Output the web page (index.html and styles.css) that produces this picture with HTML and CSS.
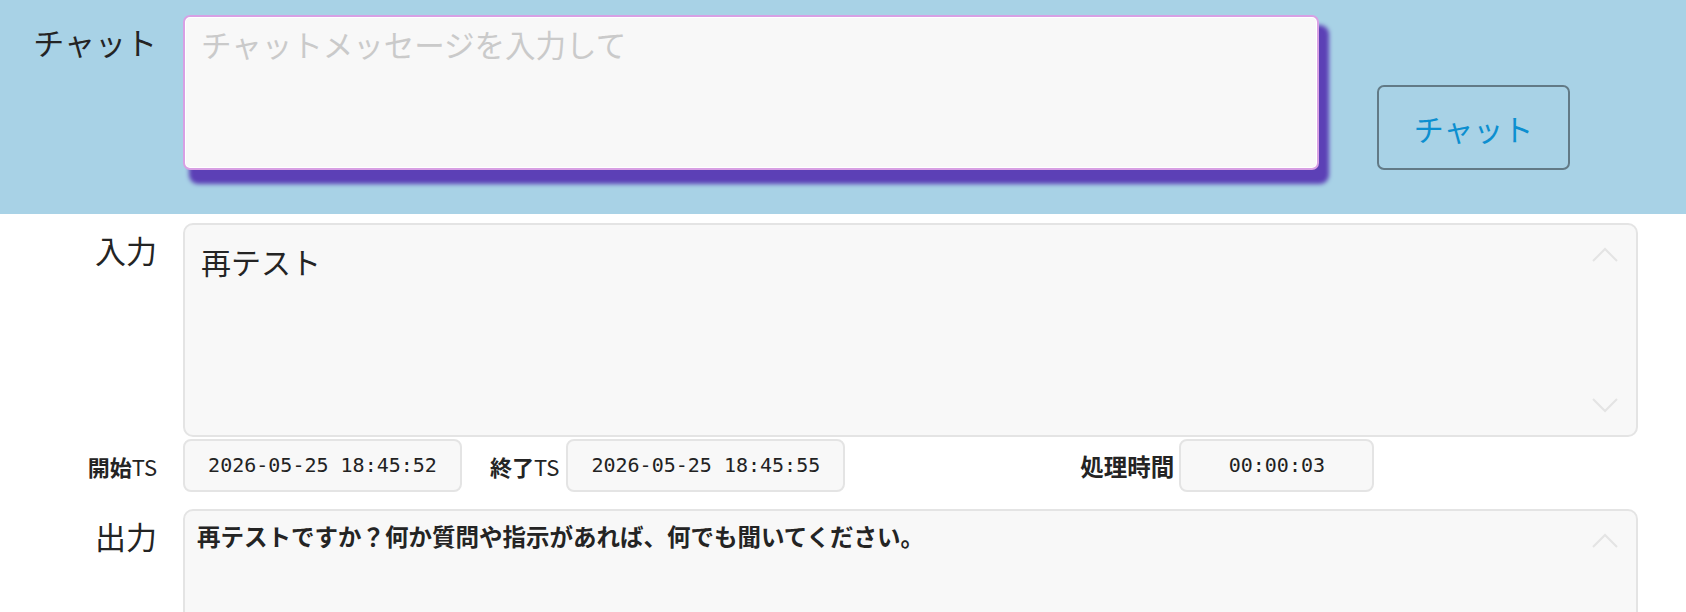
FILE: index.html
```html
<!DOCTYPE html>
<html lang="ja">

<head>
    <meta charset="UTF-8" />
    <meta name="viewport" content="width=device-width, initial-scale=1.0" />
    <title>チャット</title>
    <link rel="stylesheet" href="styles.css">
</head>

<body class="page">

    <header class="chatBar">
        <label class="fieldLabel" for="chat-input">チャット</label>
        <textarea id="chat-input" class="chatInp" placeholder="チャットメッセージを入力して"></textarea>
        <button type="button" class="chatBttn">チャット</button>
    </header>

    <main class="bodyMain">
        <section class="row">
            <span class="fieldLabel">入力</span>
            <div class="textBox inBox">
                <p class="inText">再テスト</p>
                <svg class="chev chevUp" width="26" height="15" viewBox="0 0 26 15"><polyline points="1,14 13,2 25,14" /></svg>
                <svg class="chev chevDown" width="26" height="15" viewBox="0 0 26 15"><polyline points="1,1 13,13 25,1" /></svg>
            </div>
        </section>

        <section class="tsRow">
            <span class="tsLabel tsFirst">開始<span class="tsLatin">TS</span></span>
            <div class="tsBox tsWide">2026-05-25 18:45:52</div>
            <span class="tsLabel tsEnd">終了<span class="tsLatin">TS</span></span>
            <div class="tsBox tsWide">2026-05-25 18:45:55</div>
            <span class="tsLabel tsTime">処理時間</span>
            <div class="tsBox tsShort">00:00:03</div>
        </section>

        <section class="row outRow">
            <span class="fieldLabel">出力</span>
            <div class="textBox outBox">
                <p class="outText">再テストですか？何か質問や指示があれば、何でも聞いてください。</p>
                <svg class="chev chevUp" width="26" height="15" viewBox="0 0 26 15"><polyline points="1,14 13,2 25,14" /></svg>
            </div>
        </section>
    </main>

</body>

</html>
```

FILE: styles.css
```css
.page {
    margin: 0;
    background-color: rgb(255, 255, 255);
    color: rgb(38, 38, 38);
    font-family: "Noto Sans CJK JP", "Noto Sans", sans-serif;
}

.chatBar {
    display: flex;
    align-items: flex-end;
    height: 214px;
    box-sizing: border-box;
    padding: 15px 0 44px 0;
    background-color: rgb(168, 210, 230);
}

.fieldLabel {
    flex: none;
    align-self: flex-start;
    width: 157px;
    margin-right: 26px;
    padding-top: 4px;
    text-align: right;
    font-size: 31px;
    line-height: 45px;
    color: rgb(36, 36, 36);
}

.chatInp {
    flex: none;
    width: 1136px;
    height: 155px;
    box-sizing: border-box;
    margin: 0;
    padding: 5px 16px;
    border: 2px solid rgb(216, 160, 228);
    border-radius: 7px;
    background-color: rgb(248, 248, 248);
    box-shadow: inset 0 0 0 1px rgb(255, 255, 255), 8px 12px 4px 2px rgb(92, 64, 182);
    font-family: "Noto Sans CJK JP", sans-serif;
    font-size: 30.5px;
    line-height: 44px;
    color: rgb(36, 36, 36);
    resize: none;
    outline: none;
}

.chatInp::placeholder {
    color: rgb(202, 202, 202);
    opacity: 1;
}

.chatBttn {
    flex: none;
    width: 193px;
    height: 85px;
    margin-left: 58px;
    border: 2px solid rgb(98, 122, 134);
    border-radius: 7px;
    background-color: transparent;
    font-family: "Noto Sans CJK JP", sans-serif;
    font-size: 30px;
    color: rgb(12, 143, 208);
    cursor: pointer;
}

.bodyMain {
    padding-top: 9px;
}

.row {
    display: flex;
}

.textBox {
    position: relative;
    flex: none;
    width: 1455px;
    height: 214px;
    box-sizing: border-box;
    border: 2px solid rgb(228, 228, 228);
    border-radius: 10px;
    background-color: rgb(248, 248, 248);
}

.inText {
    margin: 0;
    padding: 15px 16px;
    font-size: 30px;
    line-height: 43px;
    color: rgb(36, 36, 36);
}

.outText {
    margin: 0;
    padding: 8px 12px;
    font-size: 23.5px;
    font-weight: 700;
    line-height: 34px;
    color: rgb(36, 36, 36);
}

.chev {
    position: absolute;
    right: 18px;
}

.chev polyline {
    fill: none;
    stroke: rgb(228, 228, 228);
    stroke-width: 2;
}

.chevUp {
    top: 22px;
}

.chevDown {
    bottom: 22px;
}

.tsRow {
    display: flex;
    align-items: center;
    margin-top: 2px;
}

.tsLabel {
    flex: none;
    font-size: 22px;
    font-weight: 700;
    color: rgb(36, 36, 36);
}

.tsLatin {
    font-weight: 400;
}

.tsFirst {
    width: 157px;
    margin-right: 26px;
    text-align: right;
}

.tsEnd {
    margin-left: 28px;
    margin-right: 7px;
}

.tsTime {
    margin-left: 235px;
    margin-right: 5px;
    font-size: 23.5px;
}

.tsBox {
    flex: none;
    height: 53px;
    box-sizing: border-box;
    border: 2px solid rgb(228, 228, 228);
    border-radius: 8px;
    background-color: rgb(248, 248, 248);
    font-family: "DejaVu Sans Mono", "Liberation Mono", monospace;
    font-size: 20px;
    line-height: 49px;
    text-align: center;
    color: rgb(34, 34, 34);
}

.tsWide {
    width: 279px;
}

.tsShort {
    width: 195px;
}

.outRow {
    margin-top: 17px;
}
```
